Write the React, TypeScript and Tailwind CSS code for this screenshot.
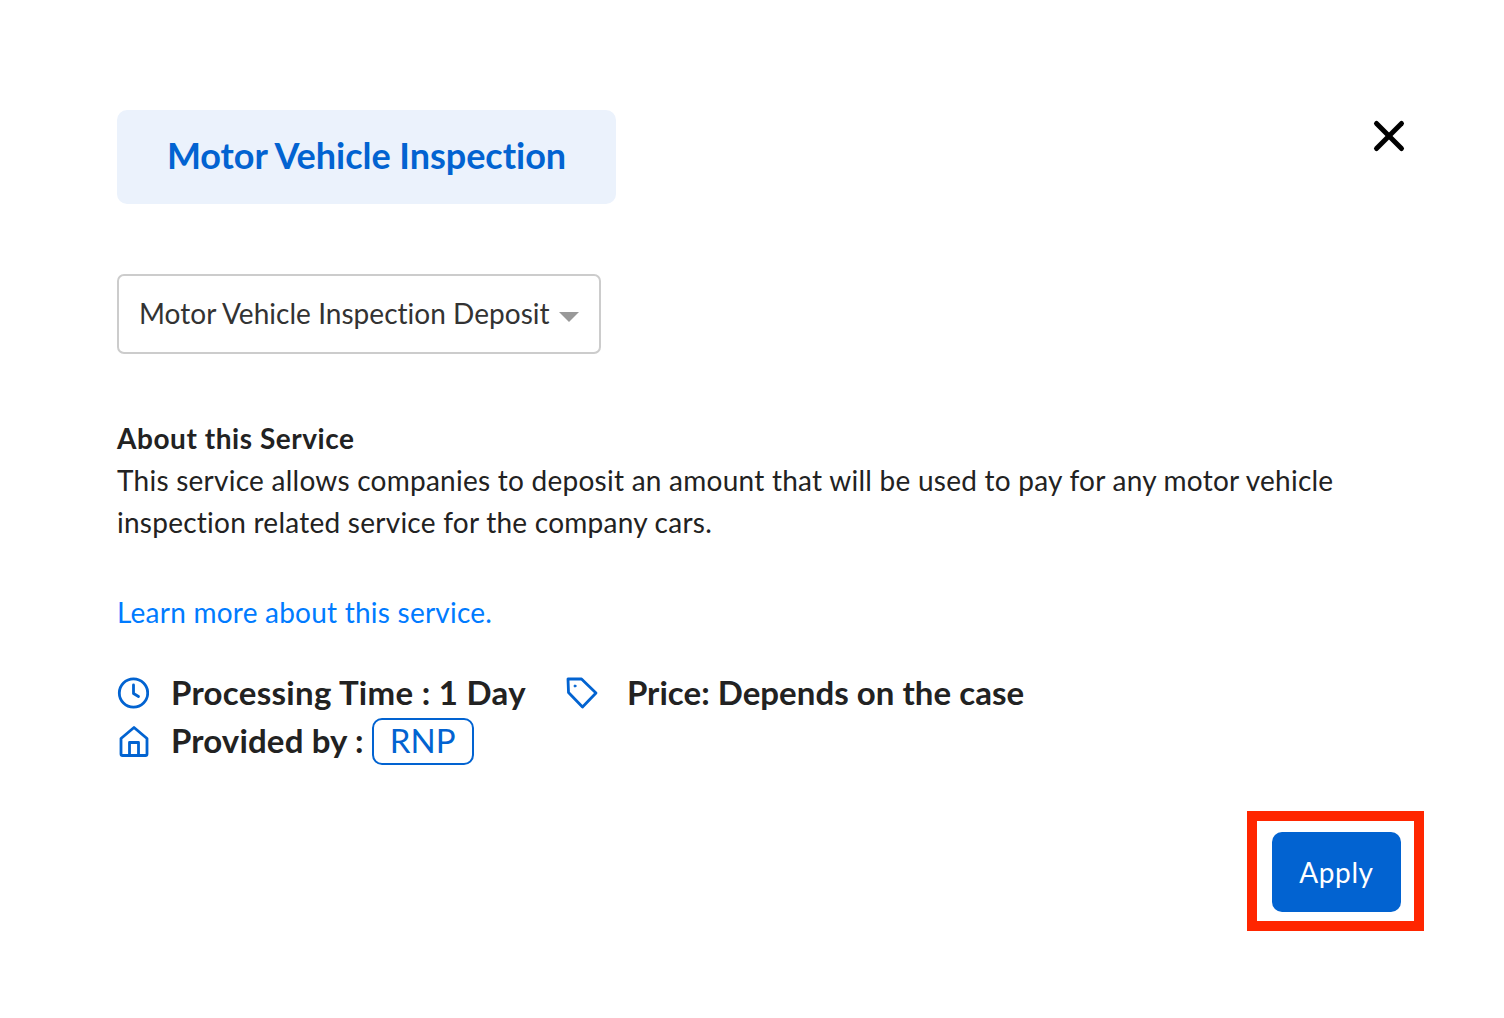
import React from "react";
import { X } from "lucide-react";

const font = "font-['Lato','Open_Sans',sans-serif]";

function ClockIcon() {
  return (
    <svg width="32" height="32" viewBox="0 0 32 32" fill="none" stroke="#0263d1" strokeWidth="2.8" strokeLinecap="round" strokeLinejoin="round">
      <circle cx="16.5" cy="16" r="14.2" />
      <path d="M16.5 8v8.5l5 3" />
    </svg>
  );
}

function TagIcon() {
  return (
    <svg width="32" height="32" viewBox="0 0 32 32" fill="none" stroke="#0263d1" strokeWidth="2.8" strokeLinecap="round" strokeLinejoin="round">
      <path d="M2 2h13.5L30 16 16.5 30 2.5 15.5z" />
      <circle cx="9" cy="9" r="1" fill="#0263d1" strokeWidth="1" />
    </svg>
  );
}

function HomeIcon() {
  return (
    <svg width="32" height="32" viewBox="0 0 32 32" fill="none" stroke="#0263d1" strokeWidth="2.8" strokeLinecap="round" strokeLinejoin="round">
      <path d="M4 13.5 17 2.5l13 11V29a1.5 1.5 0 0 1-1.5 1.5h-23A1.5 1.5 0 0 1 4 29z" />
      <path d="M12.5 30V17.5h9V30" />
    </svg>
  );
}

export default function App() {
  return (
    <div className={`${font} w-[1504px] h-[1018px] bg-white pt-[110px] pl-[117px] pr-[80px] text-[#222]`}>
      <div className="flex justify-between items-start">
        <div className="w-[499px] h-[94px] pb-[5px] rounded-[10px] bg-[#ebf2fc] flex items-center justify-center text-[36px] font-bold text-[#0263d1] tracking-[-0.03px]">
          Motor Vehicle Inspection
        </div>
        <X className="mt-[1px] mr-[10px] w-[50px] h-[50px] text-black" strokeWidth={2.4} />
      </div>

      <div className="mt-[70px] w-[484px] h-[80px] rounded-[7px] border-2 border-[#ccc] flex items-center justify-between pl-[20px] pr-[20px] text-[28px] text-[#333]">
        <span className="mt-[-2px] tracking-[0.03px]">Motor Vehicle Inspection Deposit</span>
        <span className="mt-[5px] w-0 h-0 border-x-[10px] border-x-transparent border-t-[10px] border-t-[#999]" />
      </div>

      <div className="mt-[63px] text-[28px] leading-[42px] w-[1260px]">
        <div className="font-bold tracking-[0.55px]">About this Service</div>
        <p className="tracking-[0.25px]">This service allows companies to deposit an amount that will be used to pay for any motor vehicle inspection related service for the company cars.</p>
      </div>

      <a className="block mt-[48px] text-[28px] leading-[42px] tracking-[0.23px] text-[#007bff]">Learn more about this service.</a>

      <div className="mt-[36px] flex items-center h-[48px] text-[33px] font-bold">
        <ClockIcon />
        <span className="ml-[22px] tracking-[0.3px]">Processing Time : 1 Day</span>
        <span className="ml-[40px]"><TagIcon /></span>
        <span className="ml-[29px] tracking-[0.04px]">Price: Depends on the case</span>
      </div>
      <div className="flex items-center h-[48px] text-[33px] font-bold">
        <HomeIcon />
        <span className="ml-[22px] tracking-[0.15px]">Provided by :</span>
        <span className="ml-[8px] h-[47px] w-[102px] rounded-[10px] border-2 border-[#0263d1] flex items-center justify-center font-normal text-[#0263d1]">RNP</span>
      </div>

      <div className="mt-[46px] flex justify-end">
        <div className="w-[177px] h-[120px] border-[10px] border-[#ff2600] flex items-center justify-center">
          <button className="ml-[2px] mt-[2px] w-[129px] h-[80px] rounded-[10px] bg-[#0263d1] text-white text-[28px] tracking-[0.6px]">Apply</button>
        </div>
      </div>
    </div>
  );
}
